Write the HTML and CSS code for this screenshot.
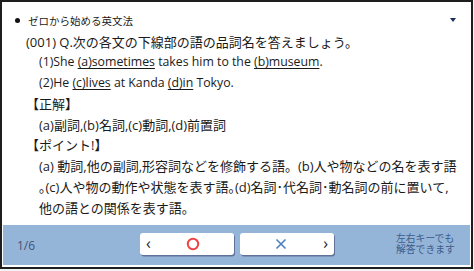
FILE: index.html
```html
<!DOCTYPE html>
<html lang="ja">
<head>
<meta charset="utf-8">
<link rel="stylesheet" href="styles.css">
</head>
<body>
<div class="frame">
  <div class="head">
    <span class="dot"></span>
    <span class="title">ゼロから始める英文法</span>
    <span class="tri"></span>
  </div>
  <div class="content">
    <p class="line">(001) Q.次の各文の下線部の語の品詞名を答えましょう。</p>
    <p class="line ind en">(1)She <u>(a)sometimes</u> takes him to the <u>(b)museum</u>.</p>
    <p class="line ind en">(2)He <u>(c)lives</u> at Kanda <u>(d)in</u> Tokyo.</p>
    <p class="line">【正解】</p>
    <p class="line ind">(a)副詞,(b)名詞,(c)動詞,(d)前置詞</p>
    <p class="line">【ポイント!】</p>
    <p class="line ind">(a) 動詞,他の副詞,形容詞などを修飾する語。(b)人や物などの名を表す語</p>
    <p class="line ind">｡(c)人や物の動作や状態を表す語｡(d)名詞･代名詞･動名詞の前に置いて,</p>
    <p class="line ind">他の語との関係を表す語。</p>
  </div>
  <div class="bar">
    <span class="page">1/6</span>
    <div class="btn">
      <span class="arrow">‹</span>
      <span class="mark">
        <svg width="14" height="14" viewBox="0 0 14 14"><circle cx="7" cy="7" r="5.2" fill="none" stroke="#ee4444" stroke-width="2"/></svg>
      </span>
    </div>
    <div class="btn">
      <span class="mark">
        <svg width="14" height="14" viewBox="0 0 14 14"><path d="M2.5 2.5 L11.5 11.5 M11.5 2.5 L2.5 11.5" stroke="#4a7fc4" stroke-width="1.6" fill="none"/></svg>
      </span>
      <span class="arrow right">›</span>
    </div>
    <div class="help">
      <span class="help-line">左右キーでも</span>
      <span class="help-line">解答できます</span>
    </div>
  </div>
</div>
</body>
</html>
```
FILE: styles.css
```css
* { box-sizing: border-box; }
html, body { margin: 0; padding: 0; }
body {
  background: #f2f2f2;
  width: 474px;
  height: 271px;
  overflow: hidden;
  font-family: "Open Sans", "Noto Sans CJK JP", sans-serif;
  color: #1a1a1a;
}
.frame {
  width: 473px;
  height: 269px;
  border: 2px solid #1e1e1e;
  background: #ffffff;
  display: flex;
  flex-direction: column;
}
.head {
  height: 20px;
  margin-top: 8px;
  display: flex;
  align-items: center;
  padding-left: 13px;
  padding-right: 15px;
}
.dot {
  width: 5px;
  height: 5px;
  border-radius: 50%;
  background: #111;
  margin-right: 8px;
}
.title {
  font-size: 10.5px;
  flex: 1;
}
.tri {
  width: 0;
  height: 0;
  border-left: 3.5px solid transparent;
  border-right: 3.5px solid transparent;
  border-top: 4px solid #1b2c5c;
}
.content {
  padding-top: 1.5px;
  padding-left: 24px;
}
.line {
  margin: 0;
  font-size: 13px;
  line-height: 20.75px;
  height: 20.75px;
  white-space: nowrap;
}
.line.ind { padding-left: 13px; }
.line.en { font-size: 12.3px; }
u { text-underline-offset: 2px; text-decoration-thickness: 1px; }
.bar {
  margin: auto 1px 2px 1px;
  height: 40px;
  background: #95b5d8;
  display: flex;
  align-items: center;
}
.page {
  width: 137px;
  padding-left: 14px;
  font-size: 12px;
  color: #44527a;
}
.btn {
  width: 94px;
  height: 22px;
  background: #fff;
  border-radius: 3px;
  box-shadow: 1px 1.5px 0 #61719a;
  display: flex;
  align-items: center;
  padding: 0 6px;
  margin-right: 6px;
  margin-top: -2px;
}
.arrow {
  font-size: 16px;
  line-height: 1;
  color: #1a2030;
  margin-top: -2px;
  width: 12px;
}
.arrow.right { text-align: right; }
.mark {
  flex: 1;
  display: flex;
  justify-content: center;
}
.mark svg { display: block; }
.help {
  margin-left: 56px;
  display: flex;
  flex-direction: column;
  margin-top: -1px;
}
.help-line {
  display: block;
  font-size: 9.8px;
  line-height: 10.5px;
  height: 10.5px;
  color: #3c5c8c;
  white-space: nowrap;
}
```
